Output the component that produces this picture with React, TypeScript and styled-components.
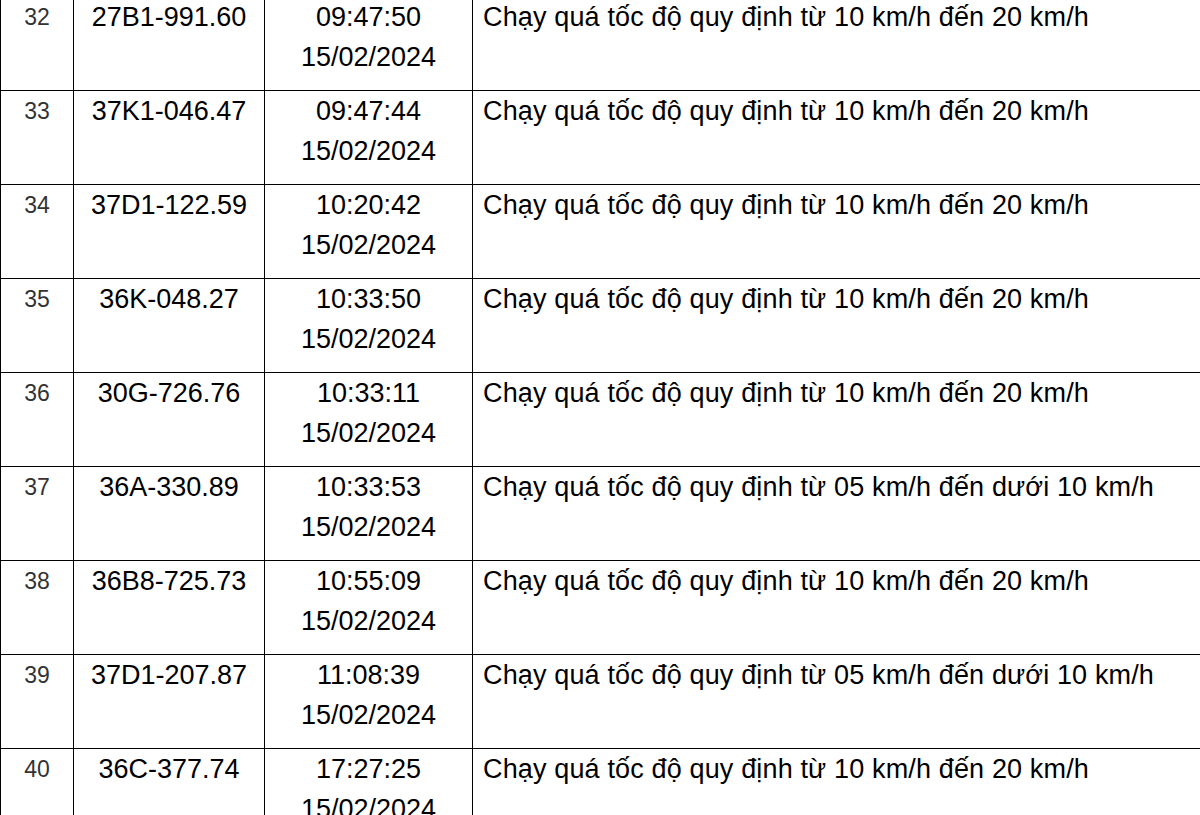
import React from 'react'
import styled, { createGlobalStyle } from 'styled-components'

type Violation = {
  no: number
  plate: string
  time: string
  date: string
  reason: string
}

const OVER_10_20 = 'Chạy quá tốc độ quy định từ 10 km/h đến 20 km/h'
const OVER_05_10 = 'Chạy quá tốc độ quy định từ 05 km/h đến dưới 10 km/h'

const rows: Violation[] = [
  { no: 32, plate: '27B1-991.60', time: '09:47:50', date: '15/02/2024', reason: OVER_10_20 },
  { no: 33, plate: '37K1-046.47', time: '09:47:44', date: '15/02/2024', reason: OVER_10_20 },
  { no: 34, plate: '37D1-122.59', time: '10:20:42', date: '15/02/2024', reason: OVER_10_20 },
  { no: 35, plate: '36K-048.27', time: '10:33:50', date: '15/02/2024', reason: OVER_10_20 },
  { no: 36, plate: '30G-726.76', time: '10:33:11', date: '15/02/2024', reason: OVER_10_20 },
  { no: 37, plate: '36A-330.89', time: '10:33:53', date: '15/02/2024', reason: OVER_05_10 },
  { no: 38, plate: '36B8-725.73', time: '10:55:09', date: '15/02/2024', reason: OVER_10_20 },
  { no: 39, plate: '37D1-207.87', time: '11:08:39', date: '15/02/2024', reason: OVER_05_10 },
  { no: 40, plate: '36C-377.74', time: '17:27:25', date: '15/02/2024', reason: OVER_10_20 },
]

export default function App() {
  return (
    <>
      <GlobalStyle />
      <Page>
        <Table>
          <tbody>
            {rows.map(r => (
              <Row key={r.no}>
                <NumCell>{r.no}</NumCell>
                <PlateCell>{r.plate}</PlateCell>
                <TimeCell>
                  {r.time}
                  <br />
                  {r.date}
                </TimeCell>
                <ReasonCell>{r.reason}</ReasonCell>
              </Row>
            ))}
          </tbody>
        </Table>
      </Page>
    </>
  )
}

const GlobalStyle = createGlobalStyle`
  html, body {
    margin: 0;
    background: #fff;
    overflow: hidden;
  }
`

const Page = styled.div`
  width: 1200px;
  height: 815px;
  overflow: hidden;
`

// the sheet is scrolled a few px past row 32's top border
const Table = styled.table`
  border-collapse: collapse;
  table-layout: fixed;
  width: 1232px;
  margin-top: -4px;
  font-family: 'Liberation Sans', Arial, sans-serif;
`

const Row = styled.tr`
  height: 94px;
`

const Cell = styled.td`
  border: 1px solid #000;
  padding: 0 10px;
  vertical-align: top;
  font-size: 27px;
  line-height: 40px;
  color: #000;
  white-space: nowrap;
`

const NumCell = styled(Cell)`
  width: 72px;
  padding: 0;
  text-align: center;
  font-size: 23px;
  color: #333;
`

const PlateCell = styled(Cell)`
  width: 190px;
  padding: 0;
  text-align: center;
`

const TimeCell = styled(Cell)`
  width: 207px;
  padding: 0;
  text-align: center;
`

const ReasonCell = styled(Cell)`
  width: 760px;
  text-align: left;
  letter-spacing: 0.15px;
`
